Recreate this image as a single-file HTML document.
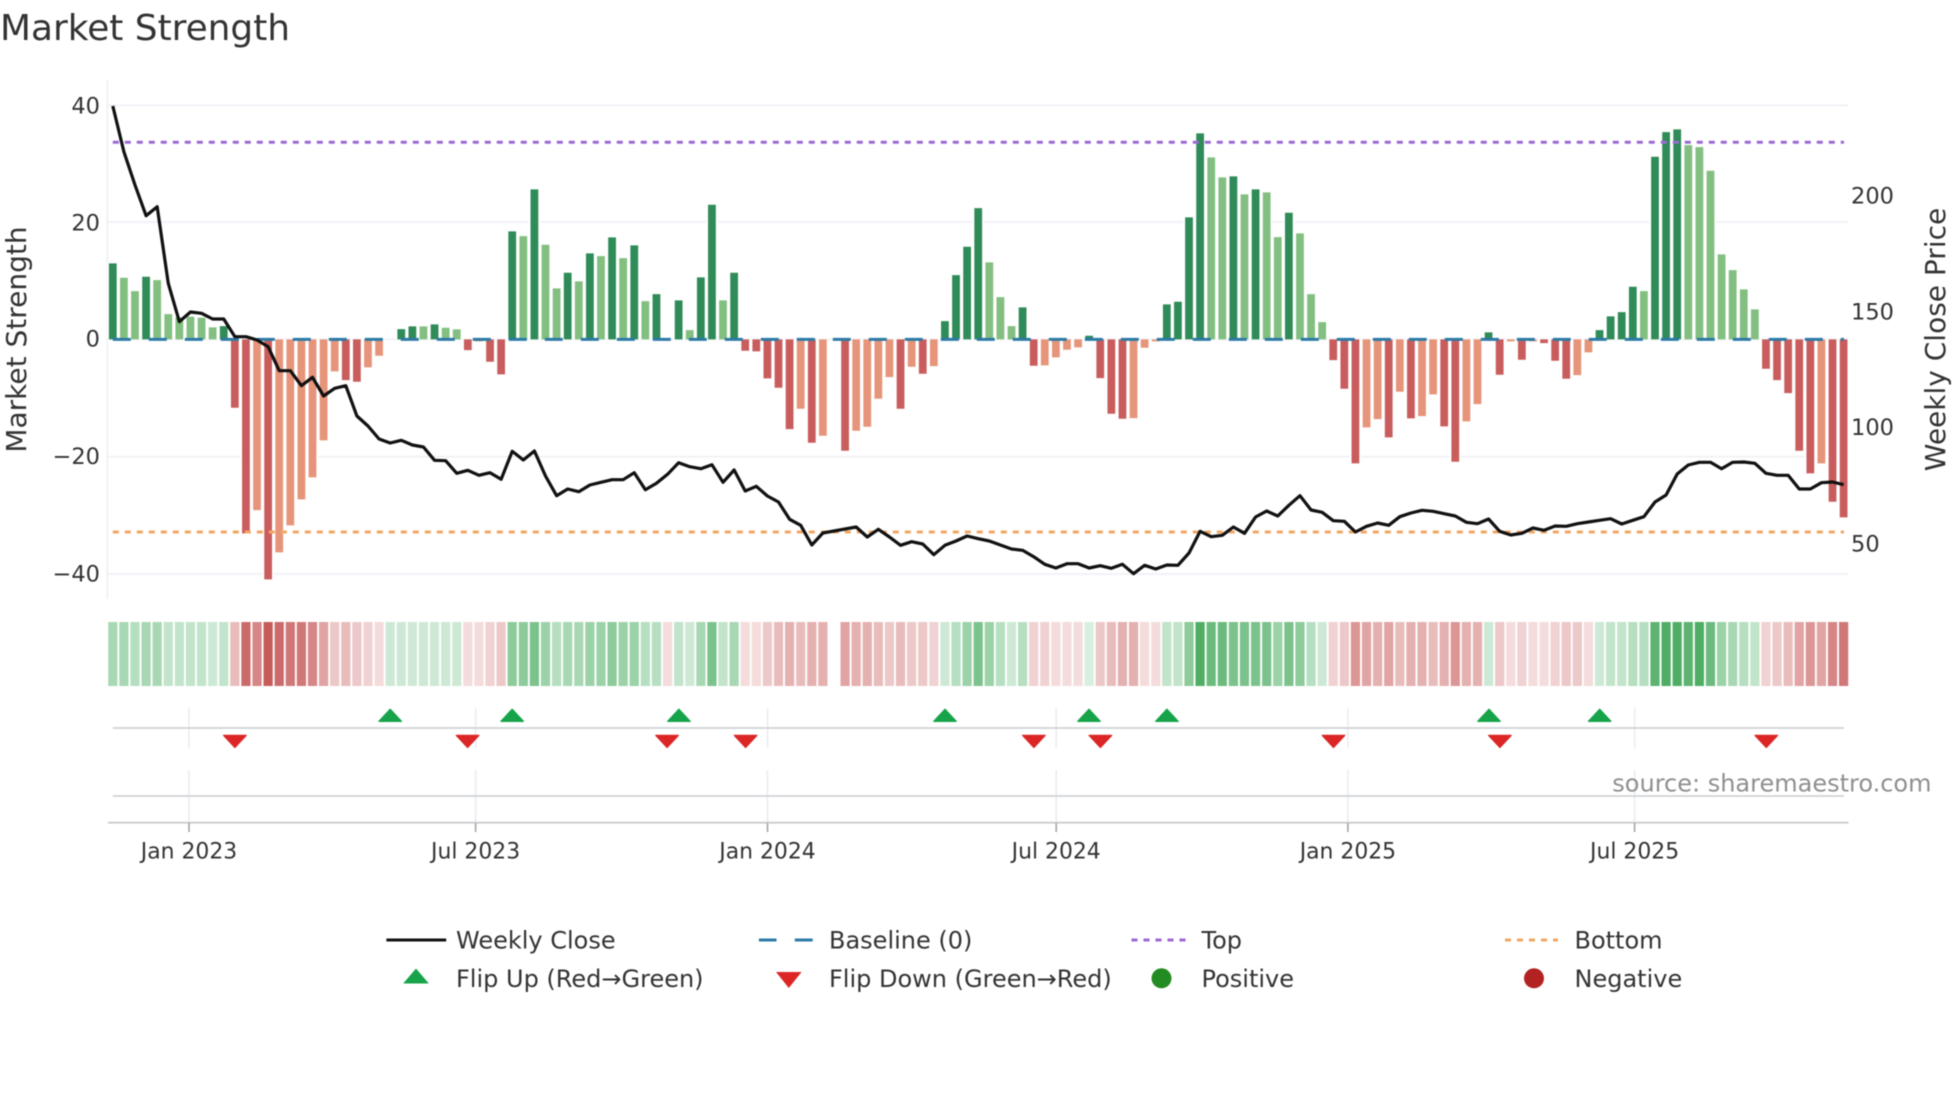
<!DOCTYPE html>
<html lang="en">
<head>
<meta charset="utf-8">
<title>Market Strength</title>
<style>
html,body{margin:0;padding:0;background:#fff;width:1960px;height:1102px;overflow:hidden}
svg{display:block;filter:blur(.4px)}
text{font-family:"DejaVu Sans","Liberation Sans",sans-serif;fill:#333}
</style>
</head>
<body>
<svg width="1960" height="1102" viewBox="0 0 1960 1102" xmlns="http://www.w3.org/2000/svg">
<defs>
<path id="bdg" d="M0 0V-76M3 0V-62.7M10 0V-13.3M26 0V-10.3M27 0V-13M29 0V-15M36 0V-108M38 0V-150M41 0V-66.7M43 0V-86M45 0V-102M47 0V-94M49 0V-45.3M51 0V-39M53 0V-62M54 0V-134.7M56 0V-66.7M75 0V-18.3M76 0V-64.3M77 0V-92.7M78 0V-131.3M82 0V-32M88 0V-3.7M95 0V-35M96 0V-37.7M97 0V-122M98 0V-206M101 0V-163M103 0V-150M106 0V-126.7M124 0V-7M134 0V-9.3M135 0V-23M136 0V-27.3M137 0V-52.7M139 0V-182.7M140 0V-207.3M141 0V-210"/>
<path id="blg" d="M1 0V-61.7M2 0V-48.3M4 0V-59.3M5 0V-25.3M6 0V-22M7 0V-22.7M8 0V-21.7M9 0V-12M28 0V-13M30 0V-11.7M31 0V-10M37 0V-103.3M39 0V-94.7M40 0V-51M42 0V-58M44 0V-83.3M46 0V-81.3M48 0V-38.3M52 0V-9.3M55 0V-39M79 0V-77M80 0V-42.3M81 0V-13.3M99 0V-182M100 0V-162M102 0V-145M104 0V-147M105 0V-102.3M107 0V-106M108 0V-45.3M109 0V-17.3M138 0V-48.3M142 0V-194.3M143 0V-192.3M144 0V-168.7M145 0V-85M146 0V-69.3M147 0V-50M148 0V-30"/>
<path id="brd" d="M11 0V68.3M12 0V194M14 0V240M21 0V40.7M22 0V42.3M32 0V10.7M34 0V22.3M35 0V35M57 0V11.3M58 0V12M59 0V39M60 0V48.3M61 0V89.7M63 0V103.3M66 0V111.3M71 0V69.3M73 0V34.3M83 0V26.3M89 0V38.7M90 0V74.3M91 0V79.3M110 0V20.7M111 0V49.3M112 0V124M115 0V98M117 0V79M120 0V87M121 0V122.3M125 0V35.3M127 0V20.3M129 0V3.7M130 0V21.3M131 0V39.3M149 0V29.3M150 0V40.7M151 0V53.7M152 0V111.3M153 0V134M155 0V162.3M156 0V178"/>
<path id="bsa" d="M13 0V170.7M15 0V213M16 0V186M17 0V160M18 0V138M19 0V101M20 0V32M23 0V28M24 0V16.3M33 0V2M62 0V69.3M64 0V96.3M67 0V91.3M68 0V87.3M69 0V59.3M70 0V37.7M72 0V27.3M74 0V26.7M84 0V26M85 0V18M86 0V10.3M87 0V8M92 0V78.7M93 0V8.3M94 0V2M113 0V88M114 0V79.7M116 0V52.3M118 0V76.7M119 0V55M122 0V82M123 0V64.7M126 0V2M128 0V2M132 0V35.7M133 0V13M154 0V124"/>
</defs>

<!-- grid -->
<g stroke="#f0f1f6" stroke-width="1.8" fill="none">
<path d="M107.3 80V599"/>
<path d="M107 105.3H1848.5M107 222H1848.5M107 339.4H1848.5M107 456.7H1848.5M107 574H1848.5"/>
</g>

<!-- bars -->
<g transform="translate(112.8 339.4) scale(11.095 1)" fill="none">
<g stroke="#fff" stroke-width="1">
<use href="#bdg"/><use href="#blg"/><use href="#brd"/><use href="#bsa"/>
</g>
<g stroke-width=".7">
<use href="#bdg" stroke="#2f8b58"/>
<use href="#blg" stroke="#82bf80"/>
<use href="#brd" stroke="#c95d5d"/>
<use href="#bsa" stroke="#e6957a"/>
</g>
</g>

<!-- reference lines -->
<path d="M112.8 142.3H1844" stroke="#9c69d6" stroke-width="3" stroke-dasharray="6 6" fill="none"/>
<path d="M112.8 532H1844" stroke="#f2a765" stroke-width="3" stroke-dasharray="6 6" fill="none"/>
<path d="M112.8 339.4H1844" stroke="#2c7aa6" stroke-width="3" stroke-dasharray="18 18" fill="none"/>

<!-- price line -->
<g transform="translate(112.8 0) scale(11.095 1)">
<polyline fill="none" stroke="#111" stroke-width="3.2" stroke-linejoin="round" vector-effect="non-scaling-stroke" points="0,106 1,151.7 2,185 3,215.7 4,206.7 5,283.3 6,321.7 7,312 8,313.3 9,319 10,319 11,336.7 12,336.7 13,340 14,346.7 15,370.7 16,370.7 17,385.7 18,377.3 19,396 20,388.3 21,385.7 22,416 23,426 24,439 25,443 26,440.3 27,445 28,447 29,460.3 30,460.7 31,473.3 32,470.3 33,475.3 34,472.7 35,479.3 36,451.3 37,460 38,451 39,476 40,495.7 41,489 42,491.7 43,485 44,482.3 45,479.7 46,479.7 47,472.7 48,489.7 49,483.3 50,474.3 51,462.7 52,466.7 53,468.7 54,464.7 55,482.3 56,470 57,491 58,486.3 59,496 60,502 61,519.3 62,525.3 63,545 64,533 65,531 66,529 67,527 68,537 69,529.3 70,537 71,545.3 72,541.7 73,544 74,554.7 75,545.3 76,541 77,536 78,538.7 79,541 80,545 81,549 82,550.3 83,556.7 84,564.3 85,568 86,563.7 87,563.7 88,568 89,565.7 90,568.3 91,564.3 92,573.7 93,565.3 94,569 95,565 96,565.3 97,553 98,531.3 99,536.7 100,535.3 101,527 102,533.3 103,517 104,511 105,516 106,505.3 107,495.7 108,510 109,512.3 110,520.7 111,521.3 112,532 113,526.3 114,523 115,525.3 116,516.7 117,513 118,510.3 119,511.3 120,513.7 121,516 122,522.3 123,523.7 124,519 125,531.3 126,535 127,533.3 128,528 129,530.3 130,526 131,526.3 132,523.7 133,522 134,520.3 135,518.7 136,524 137,520.3 138,516.7 139,502 140,495 141,474 142,465 143,462.3 144,462.3 145,468.7 146,462.3 147,462 148,463.3 149,473.3 150,475.3 151,475.3 152,489 153,489 154,482.7 155,482 156,484.7"/>
</g>

<!-- heatmap -->
<g transform="translate(112.8 622) scale(11.095 1)" fill="none" stroke-width=".83">
<path stroke="#d8efe0" d="M88 0v64"/>
<path stroke="#cde9d5" d="M9 0v64M25 0v64M26 0v64M27 0v64M28 0v64M29 0v64M30 0v64M31 0v64M52 0v64M75 0v64M81 0v64M109 0v64M124 0v64M134 0v64"/>
<path stroke="#c2e4cb" d="M5 0v64M6 0v64M7 0v64M8 0v64M10 0v64M51 0v64M55 0v64M95 0v64M96 0v64M135 0v64M136 0v64M148 0v64"/>
<path stroke="#b5dfc0" d="M2 0v64M40 0v64M48 0v64M49 0v64M76 0v64M80 0v64M82 0v64M108 0v64M137 0v64M138 0v64M147 0v64"/>
<path stroke="#a8d8b3" d="M0 0v64M1 0v64M3 0v64M4 0v64M41 0v64M42 0v64M53 0v64M56 0v64M146 0v64"/>
<path stroke="#9bd2a7" d="M39 0v64M43 0v64M44 0v64M46 0v64M47 0v64M77 0v64M79 0v64M105 0v64M145 0v64"/>
<path stroke="#8dcb9b" d="M36 0v64M37 0v64M45 0v64M97 0v64M107 0v64"/>
<path stroke="#7cc28c" d="M38 0v64M54 0v64M78 0v64M101 0v64M102 0v64M103 0v64M104 0v64M106 0v64"/>
<path stroke="#6cbb7e" d="M99 0v64M100 0v64M144 0v64"/>
<path stroke="#5cb470" d="M139 0v64M142 0v64"/>
<path stroke="#4fae64" d="M98 0v64M140 0v64M141 0v64M143 0v64"/>
<path stroke="#f4dcdc" d="M24 0v64M32 0v64M33 0v64M50 0v64M57 0v64M58 0v64M85 0v64M86 0v64M87 0v64M93 0v64M94 0v64M126 0v64M128 0v64M129 0v64M133 0v64"/>
<path stroke="#f1d2d2" d="M23 0v64M34 0v64M74 0v64M83 0v64M84 0v64M110 0v64M127 0v64M130 0v64M149 0v64"/>
<path stroke="#edc8c8" d="M20 0v64M22 0v64M35 0v64M59 0v64M70 0v64M72 0v64M73 0v64M89 0v64M111 0v64M125 0v64M131 0v64M132 0v64M150 0v64"/>
<path stroke="#e9bcbc" d="M11 0v64M21 0v64M60 0v64M62 0v64M69 0v64M71 0v64M90 0v64M116 0v64M119 0v64M151 0v64"/>
<path stroke="#e5b0b0" d="M61 0v64M63 0v64M64 0v64M67 0v64M68 0v64M91 0v64M92 0v64M114 0v64M117 0v64M118 0v64M120 0v64M122 0v64M123 0v64"/>
<path stroke="#e1a3a3" d="M19 0v64M66 0v64M113 0v64M115 0v64M152 0v64M154 0v64"/>
<path stroke="#dc9696" d="M112 0v64M121 0v64M153 0v64"/>
<path stroke="#d68686" d="M13 0v64M18 0v64M155 0v64"/>
<path stroke="#d07878" d="M16 0v64M17 0v64M156 0v64"/>
<path stroke="#cb6a6a" d="M12 0v64M15 0v64"/>
<path stroke="#c65c58" d="M14 0v64"/>
</g>

<!-- lower panels -->
<g stroke="#e8eaee" stroke-width="1.4" fill="none">
<path d="M189 708V748M475.6 708V748M767.5 708V748M1056.2 708V748M1347.9 708V748M1634.6 708V748"/>
<path d="M189 770V822M475.6 770V822M767.5 770V822M1056.2 770V822M1347.9 770V822M1634.6 770V822"/>
</g>
<path d="M112.8 728H1844M112.8 796H1844" stroke="#d0d2d7" stroke-width="1.8" fill="none"/>
<path d="M108 822.7H1848.5" stroke="#cacccf" stroke-width="1.8" fill="none"/>
<path d="M189 823V832M475.6 823V832M767.5 823V832M1056.2 823V832M1347.9 823V832M1634.6 823V832" stroke="#a0a0a0" stroke-width="1.5" fill="none"/>

<g stroke-linejoin="round" stroke-width="1.4">
<path fill="#16a34a" stroke="#16a34a" d="M379 721.3h22.4l-11.2-12zM501 721.3h22.4l-11.2-12zM667.7 721.3h22.4l-11.2-12zM933.8 721.3h22.4l-11.2-12zM1077.8 721.3h22.4l-11.2-12zM1155.7 721.3h22.4l-11.2-12zM1477.8 721.3h22.4l-11.2-12zM1588.5 721.3h22.4l-11.2-12z"/>
<path fill="#dc2626" stroke="#dc2626" d="M223.7 735.4h22.4l-11.2 12zM456.4 735.4h22.4l-11.2 12zM655.9 735.4h22.4l-11.2 12zM734.4 735.4h22.4l-11.2 12zM1022.7 735.4h22.4l-11.2 12zM1089.2 735.4h22.4l-11.2 12zM1322.3 735.4h22.4l-11.2 12zM1488.7 735.4h22.4l-11.2 12zM1755.1 735.4h22.4l-11.2 12z"/>
</g>

<!-- text -->
<text x="0" y="40" font-size="35.9">Market Strength</text>
<g font-size="22.5" text-anchor="end">
<text x="100" y="113.7">40</text>
<text x="100" y="230.5">20</text>
<text x="100" y="346.7">0</text>
<text x="100" y="464">−20</text>
<text x="100" y="581.5">−40</text>
</g>
<g font-size="22.5">
<text x="1851" y="203.4">200</text>
<text x="1851" y="319.3">150</text>
<text x="1851" y="435">100</text>
<text x="1851" y="551.7">50</text>
</g>
<text font-size="28" text-anchor="middle" transform="translate(26 339.5) rotate(-90)">Market Strength</text>
<text font-size="28" text-anchor="middle" transform="translate(1945 339.5) rotate(-90)">Weekly Close Price</text>
<g font-size="21.9" text-anchor="middle">
<text x="189" y="858.3">Jan 2023</text>
<text x="475.6" y="858.3">Jul 2023</text>
<text x="767.5" y="858.3">Jan 2024</text>
<text x="1056.2" y="858.3">Jul 2024</text>
<text x="1347.9" y="858.3">Jan 2025</text>
<text x="1634.6" y="858.3">Jul 2025</text>
</g>
<text x="1612.3" y="791.7" font-size="24" style="fill:#8f8f8f">source: sharemaestro.com</text>

<!-- legend -->
<path d="M386.4 940H446.2" stroke="#111" stroke-width="3" fill="none"/>
<path d="M758.9 940H776.5M794.8 940H812.7" stroke="#2c7aa6" stroke-width="3" fill="none"/>
<path d="M1131.5 940H1187" stroke="#9c69d6" stroke-width="3" stroke-dasharray="6 6" fill="none"/>
<path d="M1505 940H1558" stroke="#f2a765" stroke-width="3" stroke-dasharray="6 6" fill="none"/>
<path fill="#16a34a" d="M403.2 983.5h25.6l-12.8-15z"/>
<path fill="#dc2626" d="M776 972h25.6l-12.8 16z"/>
<circle cx="1161.5" cy="978.3" r="10" fill="#228b22"/>
<circle cx="1534" cy="978.3" r="10" fill="#b22222"/>
<g font-size="24">
<text x="456" y="948.3">Weekly Close</text>
<text x="829" y="948.3">Baseline (0)</text>
<text x="1201.5" y="948.3">Top</text>
<text x="1574.5" y="948.3">Bottom</text>
<text x="456" y="987">Flip Up (Red→Green)</text>
<text x="829" y="987">Flip Down (Green→Red)</text>
<text x="1201.5" y="987">Positive</text>
<text x="1574.5" y="987">Negative</text>
</g>
</svg>
</body>
</html>
